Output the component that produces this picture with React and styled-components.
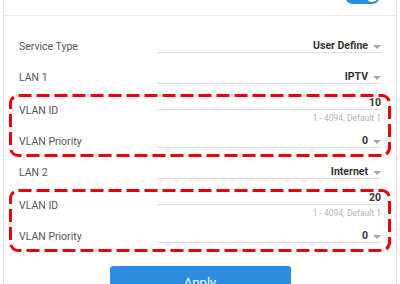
import React from "react";
import styled, { createGlobalStyle } from "styled-components";

const Global = createGlobalStyle`
  body {
    margin: 0;
    background: #ffffff;
    font-family: Roboto, "Liberation Sans", sans-serif;
    overflow: hidden;
  }
`;

const Page = styled.div`
  padding: 0 3px;
  height: 284px;
  overflow: hidden;
`;

const Card = styled.div`
  margin-top: -12px;
  border-left: 1px solid #e4e4e4;
  border-right: 1px solid #e4e4e4;
  background: #fff;
`;

const Header = styled.div`
  height: 27px;
  border-bottom: 1px solid #e6e6e6;
  display: flex;
  justify-content: space-between;
  align-items: flex-start;
  padding: 0 16px 0 16px;
`;

const Title = styled.div`
  font-size: 12px;
  line-height: 12px;
  color: #666;
`;

const Toggle = styled.div`
  width: 35px;
  height: 16px;
  border-radius: 8px;
  background: #2a8de2;
  display: flex;
  justify-content: flex-end;
  align-items: center;
  padding-right: 2px;
  box-sizing: border-box;
`;

const Knob = styled.div`
  width: 12px;
  height: 12px;
  border-radius: 50%;
  background: #fff;
`;

const Body = styled.div`
  padding: 15px 5px 0 5px;
`;

const Row = styled.div`
  display: grid;
  grid-template-columns: 138px 1fr;
  align-items: center;
  height: 31px;
  padding: 0 10px;
`;

const Label = styled.div`
  font-size: 10.5px;
  color: #555;
`;

const Field = styled.div`
  display: flex;
  flex-direction: column;
  align-items: stretch;
`;

const Value = styled.div`
  height: 12px;
  line-height: 12px;
  border-bottom: 1px solid #dcdcdc;
  display: flex;
  justify-content: flex-end;
  align-items: center;
  gap: 5px;
  font-size: 10.5px;
  font-weight: 700;
  color: #333;
`;

const Caret = styled.span`
  width: 0;
  height: 0;
  border-left: 4px solid transparent;
  border-right: 4px solid transparent;
  border-top: 4px solid #a8a8a8;
  margin-top: 1px;
`;

const Hint = styled.div`
  margin-top: 3px;
  line-height: 11px;
  font-size: 8.5px;
  color: #b4b4b4;
  text-align: right;
`;

const Group = styled.div`
  position: relative;
  margin-top: 1px;
  padding-top: 1px;
`;

const Outline = styled.svg`
  position: absolute;
  inset: 0;
  width: 100%;
  height: 100%;
  overflow: visible;
  pointer-events: none;
`;

const Footer = styled.div`
  display: flex;
  justify-content: center;
  padding-top: 14px;
`;

const Button = styled.button`
  width: 181px;
  height: 32px;
  border: none;
  border-radius: 3px;
  background: #2a8de2;
  color: #fff;
  font-family: Roboto, "Liberation Sans", sans-serif;
  font-size: 13px;
  padding: 0;
`;

const SelectRow = ({ label, value }) => (
  <Row>
    <Label>{label}</Label>
    <Field>
      <Value>
        {value}
        <Caret />
      </Value>
    </Field>
  </Row>
);

const InputRow = ({ label, value, hint }) => (
  <Row>
    <Label>{label}</Label>
    <Field>
      <Value>{value}</Value>
      <Hint>{hint}</Hint>
    </Field>
  </Row>
);

const DashedBox = ({ children }) => (
  <Group>
    <Outline>
      <rect
        x="1.5"
        y="1.5"
        width="calc(100% - 3px)"
        height="calc(100% - 3px)"
        rx="8"
        fill="none"
        stroke="#e8000b"
        strokeWidth="3"
        strokeDasharray="13 5"
      />
    </Outline>
    {children}
  </Group>
);

export default function App() {
  return (
    <Page>
      <Global />
      <Card>
        <Header>
          <Title>IPTV</Title>
          <Toggle>
            <Knob />
          </Toggle>
        </Header>
        <Body>
          <SelectRow label="Service Type" value="User Define" />
          <SelectRow label="LAN 1" value="IPTV" />
          <DashedBox>
            <InputRow label="VLAN ID" value="10" hint="1 - 4094, Default 1" />
            <SelectRow label="VLAN Priority" value="0" />
          </DashedBox>
          <SelectRow label="LAN 2" value="Internet" />
          <DashedBox>
            <InputRow label="VLAN ID" value="20" hint="1 - 4094, Default 1" />
            <SelectRow label="VLAN Priority" value="0" />
          </DashedBox>
          <Footer>
            <Button>Apply</Button>
          </Footer>
        </Body>
      </Card>
    </Page>
  );
}
